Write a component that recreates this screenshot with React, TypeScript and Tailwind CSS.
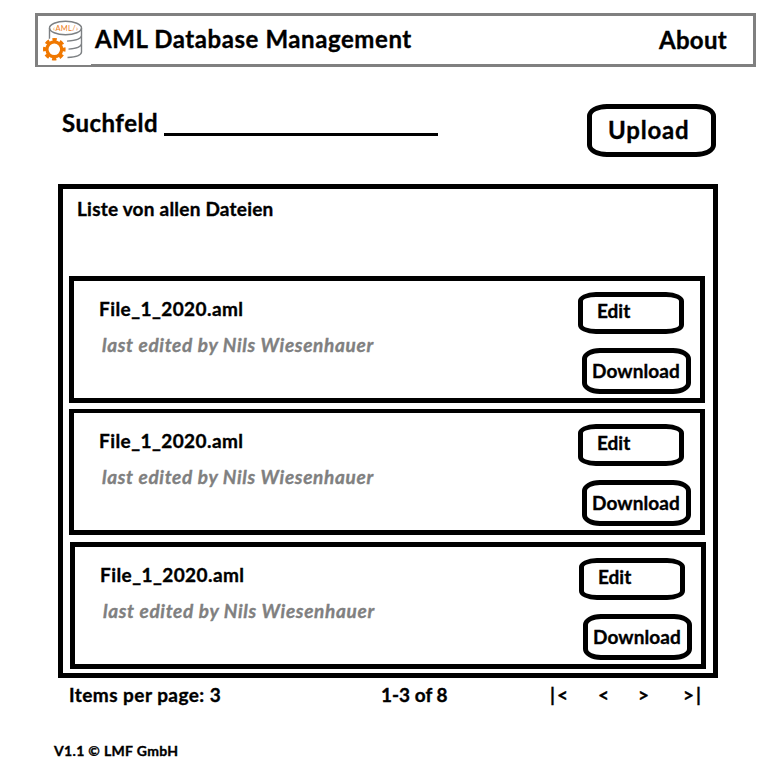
import type { ReactNode } from "react";

function OutlineButton({ className, children }: { className: string; children: ReactNode }) {
  return (
    <button
      className={`block border-[5px] border-black text-left whitespace-nowrap font-bold ${className}`}
    >
      {children}
    </button>
  );
}

function Logo() {
  return (
    <svg width="53" height="49" viewBox="38 16 53 49" className="block shrink-0 bg-white">
      <g fill="none" stroke="#7d8083" strokeWidth="1.4">
        <ellipse cx="65.5" cy="28" rx="16" ry="6.7" />
        <path d="M49.5 28V40M81.5 28V52c0 3-6 5-14 5.500M81.500 35.500c0 3-6 5-14.500 5.600M81.500 43.500c0 3-5 5-13 5.600" />
      </g>
      <text
        x="65.500"
        y="31"
        textAnchor="middle"
        fontSize="7.500"
        fill="#ee7d22"
        textLength="25"
        className="font-['Lato'] font-normal [-webkit-text-stroke:0px]"
      >
        ‹AML/›
      </text>
      <circle cx="54.300" cy="49.300" r="11.500" fill="#fff" />
      <circle
        cx="54.300"
        cy="49.300"
        r="9.500"
        fill="none"
        stroke="#f07800"
        strokeWidth="3.600"
        strokeDasharray="4.200 3.261"
        strokeDashoffset="2.100"
      />
      <circle cx="54.300" cy="49.300" r="7.400" fill="none" stroke="#f07800" strokeWidth="3.200" />
    </svg>
  );
}

function FileCard({ className }: { className: string }) {
  return (
    <article className={`flex w-[636px] justify-between border-[5px] border-black ${className}`}>
      <div className="pl-[25px]">
        <h3 className="text-[19px] leading-6 tracking-[0.43px]">File_1_2020.aml</h3>
        <p className="mt-3 pl-[3px] text-[19px] leading-6 tracking-[0.66px] text-[#808080] italic">
          last edited by Nils Wiesenhauer
        </p>
      </div>
      <div className="-mt-[5px] w-[122px] shrink-0">
        <OutlineButton className="h-[42px] w-[106px] rounded-[18px/9px] pb-[5px] pl-[14px] text-[19px] leading-6">
          Edit
        </OutlineButton>
        <OutlineButton className="mt-3.5 ml-1 h-[46px] w-[109px] rounded-[18px/11px] pl-[5px] text-[19px] leading-6 tracking-[0.1px]">
          Download
        </OutlineButton>
      </div>
    </article>
  );
}

export default function App() {
  return (
    <div className="h-[781px] w-[768px] overflow-hidden bg-white pt-[13px] font-['Lato',sans-serif] font-bold text-black [-webkit-text-stroke:0.35px]">
      <header className="ml-[35px] flex h-[54px] w-[721px] border-[3px] border-[#808080] text-[24px] leading-[30px]">
        <Logo />
        <h1 className="mt-[8px] ml-[4px] tracking-[0.57px] whitespace-nowrap">AML Database Management</h1>
        <a className="mt-[9px] mr-[26px] ml-auto tracking-[0.3px]">About</a>
      </header>
      <section className="mt-[37px] ml-[62px] flex h-[53px] w-[654px]">
        <label className="mt-[4px] w-[102px] text-[24px] leading-[30px] tracking-[0.5px]">Suchfeld</label>
        <div className="mt-[29px] h-[3px] w-[274px] bg-black" />
        <OutlineButton className="ml-auto h-[53px] w-[129px] rounded-[20px/12px] pb-px pl-[16px] text-[24px] leading-[30px] tracking-[0.8px]">
          Upload
        </OutlineButton>
      </section>
      <main className="mt-[27px] ml-[58px] h-[494px] w-[660px] border-[5px] border-black pl-[6px]">
        <h2 className="mt-[8px] ml-[8px] h-[79px] text-[19px] leading-6 tracking-[0.22px]">
          Liste von allen Dateien
        </h2>
        <FileCard className="h-[127px] pt-[16px]" />
        <FileCard className="mt-1.5 h-[126px] border-t-4 pt-[16px]" />
        <FileCard className="mt-[7px] ml-px h-[127px] pt-[16px]" />
      </main>
      <nav className="mt-[5px] ml-[69px] flex h-6 text-[19px] leading-6 whitespace-nowrap">
        <span className="w-[312px] tracking-[0.45px]">Items per page: 3</span>
        <span className="w-[169px]">1-3 of 8</span>
        <span className="w-[48px] tracking-[2px]">|&lt;</span>
        <span className="w-[40px]">&lt;</span>
        <span className="w-[45px]">&gt;</span>
        <span className="tracking-[2px]">&gt;|</span>
      </nav>
      <footer className="mt-[36px] ml-[54px] text-[14px] leading-4 tracking-[0.33px]">V1.1 © LMF GmbH</footer>
    </div>
  );
}
